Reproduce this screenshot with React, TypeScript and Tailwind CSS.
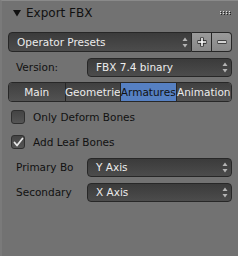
import React from "react";

function UpDown() {
  return (
    <svg width="6" height="11" viewBox="0 0 6 11" className="shrink-0">
      <path d="M3 0.5 L5.5 4 L0.5 4 Z" fill="#b4b4b4" />
      <path d="M3 10.5 L5.5 7 L0.5 7 Z" fill="#b4b4b4" />
    </svg>
  );
}

function Dropdown({ text, className = "" }: { text: string; className?: string }) {
  return (
    <div
      className={`flex h-[19px] items-center justify-between rounded-[4px] border border-[#272727] bg-gradient-to-b from-[#3b3b3b] to-[#4c4c4c] pl-[8px] pr-[3px] text-[10.5px] text-[#ececec] ${className}`}
    >
      <span className="leading-none">{text}</span>
      <UpDown />
    </div>
  );
}

function Check({ checked, label }: { checked?: boolean; label: string }) {
  return (
    <div className="flex h-[20px] items-center pl-[3px]">
      <div className="flex h-[14px] w-[14px] items-center justify-center rounded-[3px] border border-[#2f2f2f] bg-gradient-to-b from-[#444] to-[#555]">
        {checked && (
          <svg width="11" height="11" viewBox="0 0 11 11">
            <path d="M1.5 5.5 L4 8.5 L9.5 1.5" fill="none" stroke="#e6e6e6" strokeWidth="1.8" strokeLinecap="round" strokeLinejoin="round" />
          </svg>
        )}
      </div>
      <span className="ml-[8px] text-[10.5px] leading-none text-[#111]">{label}</span>
    </div>
  );
}

function Row({ label, value }: { label: string; value: string }) {
  return (
    <div className="flex h-[20px] items-center">
      <span className="w-[79px] pl-[8px] text-[10.5px] leading-none text-[#111]">{label}</span>
      <Dropdown text={value} className="flex-1" />
    </div>
  );
}

export default function App() {
  const tabs = ["Main", "Geometrie", "Armatures", "Animation"];
  return (
    <div
      className="h-[256px] w-[238px] overflow-hidden border-l-2 border-t border-l-[#7a7a7a] border-t-[#8a8a8a] bg-[#727272]"
      style={{ fontFamily: '"DejaVu Sans", sans-serif' }}
    >
      {/* header */}
      <div className="flex h-[23px] items-center pl-[11px] pr-[8px]">
        <svg width="8" height="8" viewBox="0 0 8 8">
          <path d="M0 1 L8 1 L4 7.5 Z" fill="#111" />
        </svg>
        <span className="ml-[5px] text-[12px] leading-none text-[#111]">Export FBX</span>
        <div className="ml-auto grid grid-cols-4 gap-x-[2px] gap-y-[1px]">
          {Array.from({ length: 8 }).map((_, i) => (
            <div key={i} className="h-[1px] w-[1px] bg-[#e0e0e0] shadow-[1px_1px_0_#222]" />
          ))}
        </div>
      </div>

      <div className="flex flex-col gap-[5px] pl-[6px] pr-[6px] pt-[8px]">
        {/* presets */}
        <div className="flex h-[20px]">
          <div className="flex flex-1 items-center justify-between rounded-l-[4px] border border-[#272727] bg-gradient-to-b from-[#3b3b3b] to-[#4c4c4c] pl-[8px] pr-[3px] text-[10.5px] text-[#ececec]">
            <span className="leading-none">Operator Presets</span>
            <UpDown />
          </div>
          <div className="flex w-[20px] items-center justify-center border-y border-r border-[#272727] bg-gradient-to-b from-[#9a9a9a] to-[#888]">
            <svg width="12" height="12" viewBox="0 0 12 12">
              <path d="M6 1.5 V10.5 M1.5 6 H10.5" stroke="#222" strokeWidth="3.4" />
              <path d="M6 2 V10 M2 6 H10" stroke="#fff" strokeWidth="1.6" />
            </svg>
          </div>
          <div className="flex w-[20px] items-center justify-center rounded-r-[4px] border-y border-r border-[#272727] bg-gradient-to-b from-[#9a9a9a] to-[#888]">
            <svg width="12" height="12" viewBox="0 0 12 12">
              <path d="M1.5 6 H10.5" stroke="#222" strokeWidth="3.4" />
              <path d="M2 6 H10" stroke="#fff" strokeWidth="1.6" />
            </svg>
          </div>
        </div>

        <Row label="Version:" value="FBX 7.4 binary" />

        {/* tabs */}
        <div className="grid h-[20px] grid-cols-4 overflow-hidden rounded-[4px] border border-[#272727]">
          {tabs.map((t, i) => (
            <div
              key={t}
              className={`flex items-center justify-center whitespace-nowrap text-[10.5px] leading-none ${
                i > 0 ? "border-l border-[#272727]" : ""
              } ${t === "Armatures" ? "bg-[#5680c2] text-[#111]" : "bg-gradient-to-b from-[#404040] to-[#525252] text-[#ececec]"}`}
            >
              {t}
            </div>
          ))}
        </div>

        <Check label="Only Deform Bones" />
        <Check checked label="Add Leaf Bones" />

        <Row label="Primary Bo" value="Y Axis" />
        <Row label="Secondary" value="X Axis" />
      </div>
    </div>
  );
}
